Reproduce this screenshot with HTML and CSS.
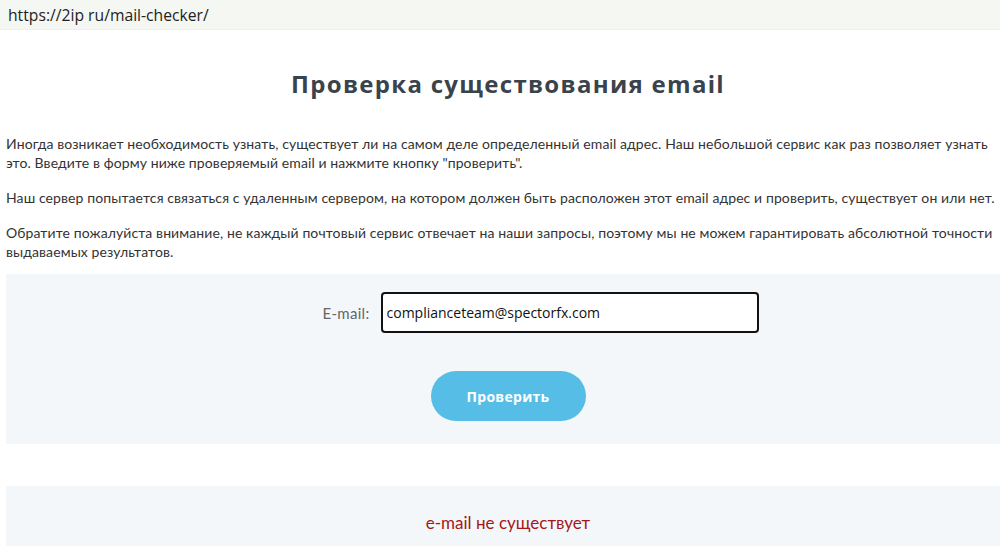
FILE: index.html
```html
<!DOCTYPE html>
<html lang="ru">
<head>
<meta charset="utf-8">
<title>Проверка существования email</title>
<link rel="stylesheet" href="styles.css">
</head>
<body>
<div class="urlbar">https://2ip ru/mail-checker/</div>
<main class="page">
  <h1 class="title">Проверка существования email</h1>
  <div class="intro">
    <p class="text">Иногда возникает необходимость узнать, существует ли на самом деле определенный email адрес. Наш небольшой сервис как раз позволяет узнать это. Введите в форму ниже проверяемый email и нажмите кнопку "проверить".</p>
    <p class="text">Наш сервер попытается связаться с удаленным сервером, на котором должен быть расположен этот email адрес и проверить, существует он или нет.</p>
    <p class="text">Обратите пожалуйста внимание, не каждый почтовый сервис отвечает на наши запросы, поэтому мы не можем гарантировать абсолютной точности выдаваемых результатов.</p>
  </div>
  <section class="panel form-panel">
    <div class="field">
      <label class="label" for="email">E-mail:</label>
      <input class="input" id="email" type="text" value="complianceteam@spectorfx.com">
    </div>
    <button class="btn" type="button">Проверить</button>
  </section>
  <section class="panel result-panel">
    <div class="result">e-mail не существует</div>
  </section>
</main>
</body>
</html>
```
FILE: styles.css
```css
html, body {
  margin: 0;
  padding: 0;
  background: #ffffff;
  overflow: hidden;
}
body {
  width: 1000px;
  height: 546px;
}
.urlbar {
  height: 30px;
  box-sizing: border-box;
  padding: 5px 0 0 8px;
  background: #f4f7f2;
  font-family: "Open Sans", "Noto Sans", sans-serif;
  font-size: 15.7px;
  color: #222;
  line-height: 20px;
  border-bottom: 1px solid #eef0ec;
}
.page {
  margin-left: 6px;
  width: 1004px;
}
.title {
  margin: 39px 0 35px;
  text-align: center;
  font-family: "Open Sans", "Noto Sans", sans-serif;
  font-weight: 700;
  font-size: 24px;
  line-height: 30px;
  color: #3a434c;
  letter-spacing: 1.3px;
}
.intro {
  display: flex;
  flex-direction: column;
  gap: 16px;
  margin-bottom: 13px;
}
.text {
  margin: 0;
  font-family: "Lato", sans-serif;
  font-size: 14px;
  line-height: 19px;
  color: #333;
  letter-spacing: 0.1px;
}
.panel {
  background: #f4f7fa;
}
.form-panel {
  height: 170px;
  box-sizing: border-box;
  padding-top: 18px;
  display: flex;
  flex-direction: column;
  align-items: center;
}
.field {
  display: flex;
  align-items: center;
  gap: 11px;
  margin-left: 65px;
}
.label {
  font-family: "Lato", sans-serif;
  font-size: 15px;
  letter-spacing: 0.3px;
  color: #666;
}
.input {
  width: 378px;
  height: 41px;
  box-sizing: border-box;
  border: 2px solid #111;
  border-radius: 4px;
  padding: 0 4px;
  font-family: "Open Sans", "Noto Sans", sans-serif;
  font-size: 14px;
  color: #111;
  background: #fff;
  outline: none;
}
.btn {
  margin-top: 38px;
  width: 155px;
  height: 50px;
  border: none;
  border-radius: 25px;
  background: #56bde6;
  color: #fff;
  font-family: "Open Sans", "Noto Sans", sans-serif;
  font-weight: 700;
  font-size: 14px;
  letter-spacing: 0.3px;
}
.result-panel {
  margin-top: 42px;
  height: 80px;
  box-sizing: border-box;
  padding-top: 26px;
  text-align: center;
}
.result {
  font-family: "Lato", sans-serif;
  font-size: 17px;
  color: #a51616;
}
```
